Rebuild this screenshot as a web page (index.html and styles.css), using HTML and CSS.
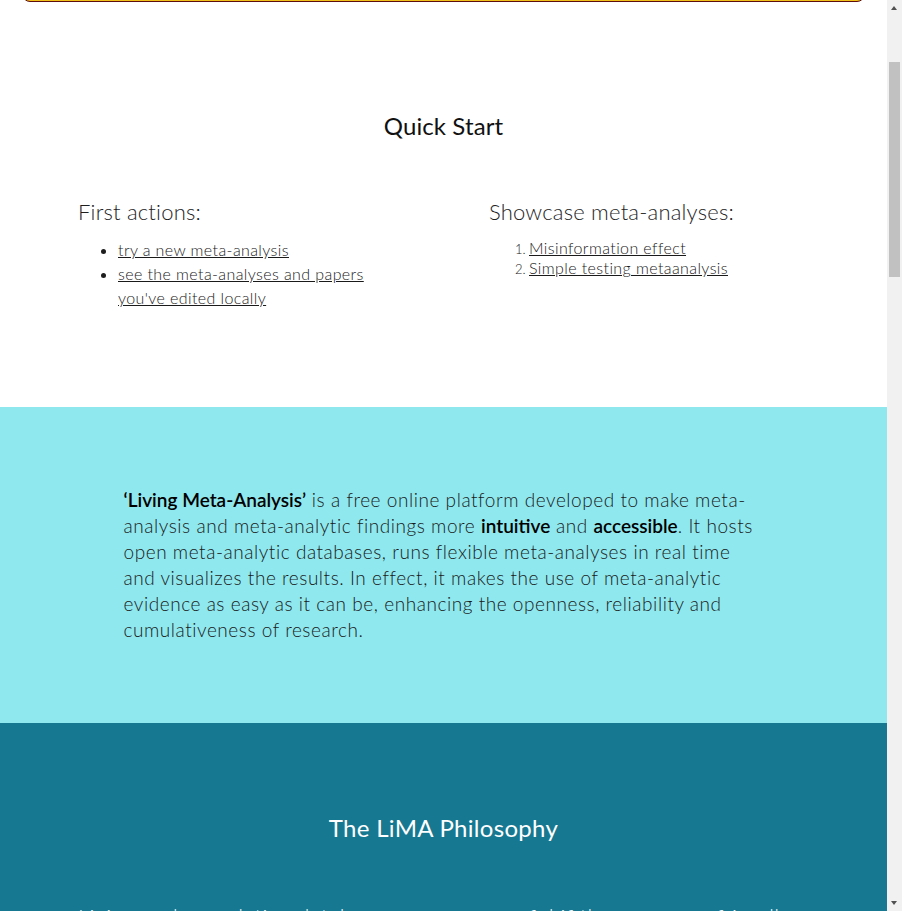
FILE: index.html
```html
<!DOCTYPE html>
<html lang="en">
<head>
<meta charset="utf-8">
<title>LiMA – Living Meta-Analysis</title>
<link rel="stylesheet" href="styles.css">
</head>
<body>
<div class="page">
<header class="page-top">
  <div class="banner">
    <h1 class="banner-title">LiMA</h1>
    <p class="banner-sub">Living Meta-Analysis</p>
  </div>
</header>

<section class="quick">
  <h2 class="quick-title">Quick Start</h2>
  <div class="quick-cols">
    <div class="col col-left">
      <h3 class="col-title">First actions:</h3>
      <ul class="actions">
        <li><a href="#">try a new meta-analysis</a></li>
        <li><a href="#">see the meta-analyses and papers you've edited locally</a></li>
      </ul>
    </div>
    <div class="col col-right">
      <h3 class="col-title">Showcase meta-analyses:</h3>
      <ol class="showcase">
        <li><a href="#">Misinformation effect</a></li>
        <li><a href="#">Simple testing metaanalysis</a></li>
      </ol>
    </div>
  </div>
</section>

<section class="about">
  <p class="about-text"><strong>‘Living Meta-Analysis’</strong> is a free online platform developed to make meta-analysis and meta-analytic findings more <strong>intuitive</strong> and <strong>accessible</strong>. It hosts open meta-analytic databases, runs flexible meta-analyses in real time and visualizes the results. In effect, it makes the use of meta-analytic evidence as easy as it can be, enhancing the openness, reliability and cumulativeness of research.</p>
</section>

<section class="philosophy">
  <h2 class="phil-title">The LiMA Philosophy</h2>
  <p class="phil-text">Living and cumulative databases are more useful if they are user-friendly. We hold that meta-analyses should be open, easy to update and easy to extend, so that any researcher can add new studies, rerun the analysis and see how the evidence changes over time.</p>
  <p class="phil-text">Every meta-analysis on LiMA is built from papers and experiments that are entered once and can be reused by anyone. Data are stored with their sources, so the path from a published study to a pooled effect size stays transparent.</p>
  <p class="phil-text">Analyses run in the browser, in real time, and update as soon as new data are added. Forest plots, grape charts and moderator analyses are drawn on the fly.</p>
</section>

<section class="features">
  <h2 class="feat-title">Features</h2>
  <ul class="feat-list">
    <li>Open meta-analytic databases</li>
    <li>Real-time meta-analysis</li>
    <li>Interactive visualizations</li>
    <li>Easy collaboration and sharing</li>
  </ul>
</section>

<footer class="foot">
  <p>LiMA – Living Meta-Analysis</p>
</footer>
</div>

<div class="scrollbar" aria-hidden="true">
  <span class="sb-arrow sb-up"></span>
  <span class="sb-thumb"></span>
  <span class="sb-arrow sb-down"></span>
</div>
<script src="script.js"></script>
</body>
</html>
```

FILE: styles.css
```css
html, body {
  margin: 0;
  padding: 0;
}
body {
  font-family: "Lato", "Open Sans", sans-serif;
  color: #1e1e1e;
  background: #fff;
}
.page {
  margin-right: 15px;
}
.page-top {
  padding: 22px 22px 0;
}
.banner {
  box-sizing: border-box;
  height: 170px;
  background: #f2c01a;
  border: 1px solid #5e0c0c;
  border-radius: 8px;
  padding: 40px;
  text-align: center;
}
.banner-title {
  margin: 0;
  font-size: 40px;
  font-weight: 400;
}
.banner-sub {
  margin: 10px 0 0;
  font-size: 20px;
}
.quick {
  padding: 110px 0 97px;
}
.quick-title {
  margin: 0;
  text-align: center;
  font-size: 24px;
  line-height: 28px;
  font-weight: 400;
  letter-spacing: 0.1px;
  color: #111;
}
.quick-cols {
  display: grid;
  grid-template-columns: 322px 1fr;
  column-gap: 89px;
  padding-left: 78px;
  margin-top: 60px;
}
.col-title {
  margin: 0;
  font-size: 22px;
  line-height: 24px;
  font-weight: 300;
  letter-spacing: 0.2px;
  color: #1e1e1e;
}
.actions {
  margin: 14px 0 0;
  padding-left: 40px;
  font-size: 16px;
  line-height: 24px;
}
.showcase {
  margin: 14px 0 0;
  padding-left: 40px;
  font-size: 16px;
  line-height: 20px;
  font-weight: 300;
}
.actions a, .showcase a {
  color: #1a1a1a;
  font-weight: 300;
  letter-spacing: 0.4px;
  text-decoration: underline;
}
.showcase li::marker {
  font-size: 13px;
  color: #222;
}
.about {
  background: #8fe8ee;
  padding: 80px 0;
}
.about-text {
  max-width: 640px;
  margin: 0 auto;
  font-size: 19px;
  line-height: 26px;
  font-weight: 300;
  letter-spacing: 0.55px;
  color: #1a1a1a;
}
.about-text strong {
  font-weight: 600;
  letter-spacing: 0;
  color: #000;
}
.philosophy {
  background: #177891;
  color: #fff;
  padding: 91px 78px 80px;
}
.phil-title {
  margin: 0;
  text-align: center;
  font-size: 24px;
  line-height: 28px;
  font-weight: 400;
  letter-spacing: 0.3px;
}
.phil-text {
  margin: 59px 0 0;
  font-size: 22px;
  line-height: 32px;
  font-weight: 300;
  letter-spacing: 0.4px;
  color: #e6f6f9;
}
.phil-text + .phil-text {
  margin-top: 24px;
}
.features {
  padding: 100px 78px 1100px;
}
.feat-title {
  margin: 0;
  text-align: center;
  font-size: 24px;
  font-weight: 400;
}
.feat-list {
  margin: 40px 0 0;
  font-size: 18px;
  line-height: 30px;
}
.foot {
  background: #333;
  color: #ddd;
  text-align: center;
  padding: 40px 0;
}
.foot p {
  margin: 0;
}

/* visual scrollbar overlay */
.scrollbar {
  position: fixed;
  top: 0;
  right: 0;
  width: 15px;
  height: 100%;
  background: #f1f1f1;
}
.sb-thumb {
  position: absolute;
  left: 2px;
  width: 11px;
  top: 62px;
  height: 215px;
  background: #c1c1c1;
}
.sb-arrow {
  position: absolute;
  left: 4px;
  width: 0;
  height: 0;
  border-left: 3.5px solid transparent;
  border-right: 3.5px solid transparent;
}
.sb-up {
  top: 6px;
  border-bottom: 4px solid #505050;
}
.sb-down {
  bottom: 6px;
  border-top: 4px solid #505050;
}
```

FILE: script.js
```js
window.scrollTo(0, 190);
document.addEventListener('DOMContentLoaded', function () { window.scrollTo(0, 190); });
window.addEventListener('load', function () { window.scrollTo(0, 190); });
```
